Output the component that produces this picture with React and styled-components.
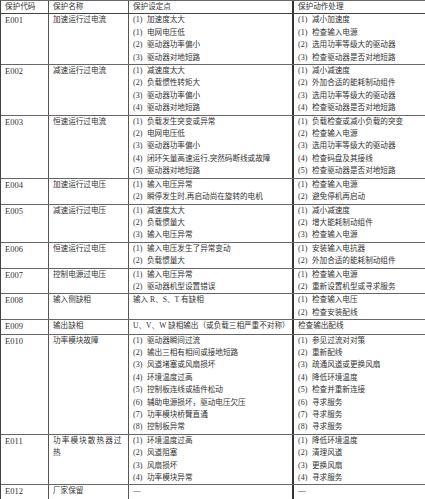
import React from "react";
import styled, { createGlobalStyle } from "styled-components";

const GlobalStyle = createGlobalStyle`
  html, body {
    margin: 0;
    padding: 0;
    background: #ffffff;
  }
  body {
    font-family: "Liberation Serif", "Noto Sans CJK SC", serif;
    color: #2b2b2b;
  }
`;

const rows = [
  {
    code: "E001",
    name: "加速运行过电流",
    causes: ["(1)|加速度太大", "(1)|电网电压低", "(2)|驱动器功率偏小", "(3)|驱动器对地短路"],
    actions: ["(1)|减小加速度", "(1)|检查输入电源", "(2)|选用功率等级大的驱动器", "(3)|检查驱动器是否对地短路"],
  },
  {
    code: "E002",
    name: "减速运行过电流",
    causes: ["(1)|减速度太大", "(2)|负载惯性转矩大", "(3)|驱动器功率偏小", "(4)|驱动器对地短路"],
    actions: ["(1)|减小减速度", "(2)|外加合适的能耗制动组件", "(3)|选用功率等级大的驱动器", "(4)|检查驱动器是否对地短路"],
  },
  {
    code: "E003",
    name: "恒速运行过电流",
    causes: [
      "(1)|负载发生突变或异常",
      "(2)|电网电压低",
      "(3)|驱动器功率偏小",
      "(4)|闭环矢量高速运行,突然码断线或故障",
      "(5)|驱动器对地短路",
    ],
    actions: [
      "(1)|负载检查或减小负载的突变",
      "(2)|检查输入电源",
      "(3)|选用功率等级大的驱动器",
      "(4)|检查码盘及其接线",
      "(5)|检查驱动器是否对地短路",
    ],
  },
  {
    code: "E004",
    name: "加速运行过电压",
    causes: ["(1)|输入电压异常", "(2)|瞬停发生时,再启动尚在旋转的电机"],
    actions: ["(1)|检查输入电源", "(2)|避免停机再启动"],
  },
  {
    code: "E005",
    name: "减速运行过电压",
    causes: ["(1)|减速度太大", "(2)|负载惯量大", "(3)|输入电压异常"],
    actions: ["(1)|减小减速度", "(2)|增大能耗制动组件", "(3)|检查输入电源"],
  },
  {
    code: "E006",
    name: "恒速运行过电压",
    causes: ["(1)|输入电压发生了异常变动", "(2)|负载惯量大"],
    actions: ["(1)|安装输入电抗器", "(2)|外加合适的能耗制动组件"],
  },
  {
    code: "E007",
    name: "控制电源过电压",
    causes: ["(1)|输入电压异常", "(2)|驱动器机型设置错误"],
    actions: ["(1)|检查输入电源", "(2)|重新设置机型或寻求服务"],
  },
  {
    code: "E008",
    name: "输入侧缺相",
    causes: ["|输入 R、S、T 有缺相"],
    actions: ["(1)|检查输入电压", "(2)|检查安装配线"],
  },
  {
    code: "E009",
    name: "输出缺相",
    causes: ["|U、V、W 缺相输出（或负载三相严重不对称）"],
    actions: ["|检查输出配线"],
  },
  {
    code: "E010",
    name: "功率模块故障",
    causes: [
      "(1)|驱动器瞬间过流",
      "(2)|输出三相有相间或接地短路",
      "(3)|风道堵塞或风扇损坏",
      "(4)|环境温度过高",
      "(5)|控制板连线或插件松动",
      "(6)|辅助电源损坏，驱动电压欠压",
      "(7)|功率模块桥臂直通",
      "(8)|控制板异常",
    ],
    actions: [
      "(1)|参见过流对对策",
      "(2)|重新配线",
      "(3)|疏通风道或更换风扇",
      "(4)|降低环境温度",
      "(5)|检查并重新连接",
      "(6)|寻求服务",
      "(7)|寻求服务",
      "(8)|寻求服务",
    ],
  },
  {
    code: "E011",
    name: "功率模块散热器过热",
    wide: true,
    causes: ["(1)|环境温度过高", "(2)|风道阻塞", "(3)|风扇损坏", "(4)|功率模块异常"],
    actions: ["(1)|降低环境温度", "(2)|清理风道", "(3)|更换风扇", "(4)|寻求服务"],
  },
  {
    code: "E012",
    name: "厂家保留",
    causes: ["|—"],
    actions: ["|—"],
  },
];

function Lines({ items }) {
  return items.map((item, i) => {
    const [num, text] = item.split("|");
    return (
      <Line key={i}>
        {num && <Num>{num}</Num>}
        <span>{text}</span>
      </Line>
    );
  });
}

export default function App() {
  return (
    <>
      <GlobalStyle />
      <Table>
        <HeadRow>
          <Cell>保护代码</Cell>
          <Cell>保护名称</Cell>
          <Cell $strong>保护设定点</Cell>
          <Cell $last>保护动作处理</Cell>
        </HeadRow>
        {rows.map((row) => (
          <Row key={row.code}>
            <Cell>
              <Code>{row.code}</Code>
            </Cell>
            <Cell>
              <Name $wide={row.wide}>{row.name}</Name>
            </Cell>
            <Cell $strong>
              <Lines items={row.causes} />
            </Cell>
            <Cell $last>
              <Lines items={row.actions} />
            </Cell>
          </Row>
        ))}
      </Table>
    </>
  );
}

const Table = styled.div`
  width: 425px;
  box-sizing: border-box;
  border-left: 1.5px solid #444;
  border-top: 1px solid #666;
  font-size: 7.6px;
  line-height: 12.4px;
`;

const Row = styled.div`
  display: grid;
  grid-template-columns: 48px 80px 165px 1fr;
  border-bottom: 1px solid #666;
`;

const HeadRow = styled(Row)`
  border-bottom: 1.5px solid #444;
`;

const Cell = styled.div`
  padding-left: 4px;
  border-right: ${(p) => (p.$strong ? "2px solid #333" : p.$last ? "none" : "1px solid #555")};
  white-space: nowrap;
  overflow: hidden;
  color: #333;
`;

const Code = styled.span`
  font-family: "Liberation Serif", serif;
  font-size: 8.5px;
`;

const Name = styled.div`
  white-space: normal;
  width: ${(p) => (p.$wide ? "72px" : "auto")};
  letter-spacing: ${(p) => (p.$wide ? "1.1px" : "0")};
`;

const Line = styled.div`
  display: flex;
  align-items: baseline;
`;

const Num = styled.span`
  flex: 0 0 14px;
  font-family: "Liberation Serif", serif;
  font-size: 8px;
`;
